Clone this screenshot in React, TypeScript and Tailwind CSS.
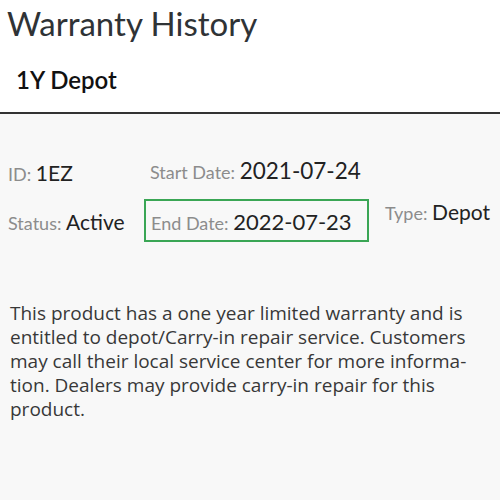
const lato = { fontFamily: 'Lato, "Liberation Sans", sans-serif' };

function Field({ label, value, size = 'text-[21px]' }: { label: string; value: string; size?: string }) {
  return (
    <div className="whitespace-nowrap leading-none">
      <span className="text-[18px] text-[#8c8c8c]">{label}: </span>
      <span className={`${size} text-[#222]`}>{value}</span>
    </div>
  );
}

export default function App() {
  return (
    <div className="w-[500px] h-[500px] bg-[#f8f8f8] flex flex-col overflow-hidden" style={lato}>
      {/* header */}
      <div className="bg-white">
        <h1 className="text-[33px] leading-none text-[#2f3336] pl-[7px] pt-[7px]">Warranty History</h1>
        <h2 className="text-[24px] leading-none font-semibold text-[#111] pl-[16px] pt-[28px] pb-[20px]">1Y Depot</h2>
      </div>
      <div className="h-[2px] bg-[#333]" />

      {/* fields */}
      <div className="grid grid-cols-[144px_233px_1fr] pt-[46px]">
        <div className="pl-[8px] pt-[2px]">
          <Field label="ID" value="1EZ" />
        </div>
        <div className="pl-[6px]">
          <Field label="Start Date" value="2021-07-24" size="text-[22.5px]" />
        </div>
        <div />
        <div className="pl-[8px] pt-[28px]">
          <Field label="Status" value="Active" />
        </div>
        <div className="mt-[16px] w-[225px] h-[43px] border-2 border-[#3aa655] flex items-center pl-[5px] pt-[2px]">
          <Field label="End Date" value="2022-07-23" size="text-[22px]" />
        </div>
        <div className="pl-[8px] pt-[18px]">
          <Field label="Type" value="Depot" />
        </div>
      </div>

      {/* description */}
      <p
        className="text-[19px] leading-[24px] text-[#383838] pl-[10px] pr-[24px] pt-[59px]"
        style={{ fontFamily: '"Open Sans", "Liberation Sans", sans-serif' }}
      >
        This product has a one year limited warranty and is entitled to depot/Carry-in repair service. Customers may call their local service center for more informa{'\u00AD'}tion. Dealers may provide carry-in repair for this product.
      </p>
    </div>
  );
}
